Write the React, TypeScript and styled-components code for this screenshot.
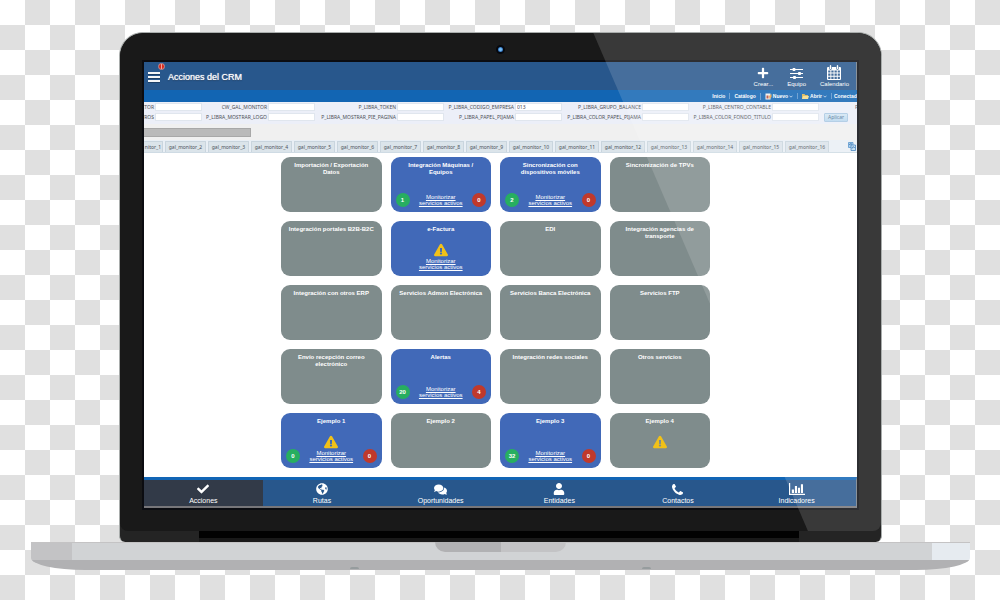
import React from "react";
import styled, { createGlobalStyle } from "styled-components";
import { FaCheck, FaComments, FaExclamationTriangle, FaGlobeAmericas, FaPlus, FaUser } from "react-icons/fa";

const sans = '"Liberation Sans", Arial, sans-serif';
const formSans = '"Noto Sans", Tahoma, sans-serif';

const GlobalStyle = createGlobalStyle`
  *, *::before, *::after { box-sizing: border-box; }
  body {
    margin: 0;
    min-height: 100vh;
    font-family: ${sans};
    background: repeating-conic-gradient(#e0e0e0 0 25%, #ffffff 0 50%) 0 0 / 50px 50px;
  }
  button { font: inherit; color: inherit; border: 0; padding: 0; background: none; cursor: pointer; }
  h1, h2 { margin: 0; }
`;

/* ---------- Laptop ---------- */

const Stage = styled.div`
  padding: 32px 0 30px;
`;

const Lid = styled.div`
  position: relative;
  margin: 0 118px 0 119px;
  border: 1px solid #a9adac;
  border-bottom: 0;
  border-radius: 24px 24px 6px 6px;
  background: #242424;
  overflow: hidden;
`;

const Bezel = styled.div`
  padding: 0 24px 23px;
  border-radius: 23px 23px 8px 8px;
  background: #191919;
`;

const CameraRow = styled.div`
  display: flex;
  justify-content: center;
  align-items: center;
  height: 29px;
  padding-top: 4px;
`;

const Camera = styled.span`
  width: 9px;
  height: 9px;
  border: 2px solid #06080d;
  border-radius: 50%;
  background: radial-gradient(#7cc0f2 0 25%, #2a6fc0 70%);
`;

const Hinge = styled.div`
  height: 11px;
  margin: 0 82px 0 79px;
  background: linear-gradient(#020202 0 7px, #191919 7px);
`;

const Glare = styled.div`
  position: absolute;
  inset: 0 0 11px;
  border-radius: 23px 23px 8px 8px;
  background: rgba(255, 255, 255, 0.14);
  clip-path: polygon(62.2% 0, 100% 0, 100% 100%, 90.4% 100%);
  pointer-events: none;
`;

const Base = styled.div`
  margin: 0 30px 0 31px;
  border-radius: 0 0 54px 54px / 0 0 12px 12px;
  overflow: hidden;
`;

const BaseTop = styled.div`
  display: flex;
  justify-content: center;
  height: 18px;
  background: linear-gradient(
    90deg,
    #c3c3c5 0 41px,
    #d1d3d5 41px calc(100% - 38px),
    #e6ebf0 calc(100% - 38px)
  );
  box-shadow: inset 0 1px #c4c3c4;
`;

const Notch = styled.div`
  width: 131px;
  height: 10px;
  border-radius: 0 0 10px 10px;
  background: linear-gradient(90deg, #b1b1b3 50%, #c3c3c5 50%);
`;

const BaseBottom = styled.div`
  display: flex;
  justify-content: space-between;
  align-items: flex-end;
  height: 10px;
  padding: 0 34% 1px;
  background: #b1b1b3;
`;

const Foot = styled.span`
  width: 9px;
  height: 2px;
  border-radius: 2px 2px 0 0;
  background: #969c9e;
`;

/* ---------- Screen ---------- */

const Screen = styled.div`
  background: #ffffff;
  box-shadow: 0 0 0 2px #0b0c11;
  overflow: hidden;
`;

const Header = styled.header`
  display: flex;
  align-items: center;
  height: 28px;
  padding: 0 7px 0 4px;
  border-right: 1px solid #77808a;
  background: #28578c;
  color: #ffffff;
`;

const MenuButton = styled.button`
  position: relative;
  display: flex;
  flex-direction: column;
  gap: 2px;
  width: 12px;
  margin-right: 8px;
  padding-top: 2px;
`;

const MenuLine = styled.span`
  height: 2px;
  background: #f4f6f8;
  box-shadow: 0 1px #1c3f66;
`;

const Alert = styled.span`
  position: absolute;
  top: -7px;
  right: -5px;
  width: 7px;
  height: 7px;
  border: 1px solid #c98a8d;
  border-radius: 50%;
  background: linear-gradient(90deg, #d9291c 2px, #f0a59c 2px 3px, #d9291c 3px);
`;

const Title = styled.h1`
  flex: 1;
  padding-top: 2px;
  font-size: 9px;
  line-height: 12px;
  font-weight: 400;
  text-shadow: 0 0 1px #ffffff, 0 1px 1px #163458;
`;

const Tools = styled.div`
  display: flex;
  gap: 14px;
`;

const Tool = styled.button`
  display: flex;
  flex-direction: column;
  align-items: center;
  font-size: 6px;
  line-height: 7px;
`;

const ToolIcon = styled.span`
  display: flex;
  align-items: center;
  justify-content: center;
  height: 16px;
`;

const LinkBar = styled.nav`
  display: flex;
  justify-content: flex-end;
  align-items: center;
  height: 12px;
  background: #1265b3;
  color: #ffffff;
  font-size: 5px;
  line-height: 6px;
  font-weight: 700;
  overflow: hidden;
`;

const BarItem = styled.a<{ $last?: boolean }>`
  display: flex;
  align-items: center;
  gap: 1px;
  width: ${(p) => (p.$last ? "26px" : "auto")};
  padding: ${(p) => (p.$last ? "0 0 0 2px" : "0 4px")};
  border-left: 1px solid #5c94cb;
  color: inherit;
  text-decoration: none;
  white-space: nowrap;

  &:first-child { border-left: 0; }
`;

const Fields = styled.form`
  display: grid;
  grid-template-columns: 58fr 113fr 129fr 118fr 127fr 130fr 38fr;
  grid-auto-rows: 8px;
  row-gap: 2px;
  padding: 1px 0 3px;
  background: #eceff8;
  font-family: ${formSans};
  font-size: 5px;
  line-height: 8px;
  color: #4c4f56;
`;

const Field = styled.div`
  display: flex;
  justify-content: flex-end;
  gap: 1px;
  min-width: 0;
  white-space: nowrap;
`;

const FieldInput = styled.input`
  flex: none;
  width: 47px;
  height: 8px;
  padding: 0 1px;
  border: 1px solid #e0e6ee;
  background: #ffffff;
  font: inherit;
  line-height: 6px;
  color: #3f434a;
`;

const EdgeLabel = styled.span`
  padding-left: 36px;
  overflow: hidden;
`;

const Apply = styled.button`
  justify-self: start;
  width: 24px;
  height: 9px;
  margin-left: 5px;
  border: 1px solid #a9c8e2;
  border-radius: 1px;
  background: linear-gradient(#d4e6f4, #b9d7ee);
  line-height: 7px;
  color: #4f7596;
`;

const ScrollTrack = styled.div`
  height: 16px;
  padding: 4px 0 3px;
  background: #f0f0f0;
`;

const ScrollThumb = styled.div`
  width: 15%;
  height: 9px;
  border: 1px solid #a8a8a8;
  border-left: 0;
  background: #bababa;
`;

const TabStrip = styled.div`
  display: flex;
  align-items: flex-end;
  gap: 2px;
  height: 13px;
  border-bottom: 1px solid #cfdbe4;
  background: #e9eff5;
  font-family: ${formSans};
  color: #4c5259;
`;

const Tab = styled.button<{ $size: "cut" | "short" | "long" }>`
  flex: none;
  width: ${(p) => ({ cut: 19, short: 41, long: 44 })[p.$size]}px;
  height: 11px;
  padding-top: 1px;
  border: 1px solid #c9d5de;
  border-width: 1px 1px 0 ${(p) => (p.$size === "cut" ? 0 : 1)}px;
  border-radius: 1px 1px 0 0;
  background: #dbe4ea;
  font-size: 5px;
  line-height: 9px;
  white-space: nowrap;
`;

const RefreshButton = styled.button`
  display: flex;
  margin: 0 1px 1px auto;
`;

/* ---------- Cards ---------- */

const Cards = styled.main`
  display: grid;
  grid-template-columns: repeat(4, 1fr);
  grid-auto-rows: minmax(55px, auto);
  gap: 9px;
  padding: 4px 147px 9px 137px;
`;

const Card = styled.section<{ $active?: boolean }>`
  display: flex;
  flex-direction: column;
  padding: 5px;
  border-radius: 9px;
  background: ${(p) => (p.$active ? "#4169b8" : "#7f8c8c")};
  color: #ffffff;
`;

const CardTitle = styled.h2`
  min-height: 14px;
  padding: 0 2px;
  font-size: 6px;
  line-height: 7px;
  text-align: center;
`;

const CardMiddle = styled.div`
  flex: 1;
  display: flex;
  justify-content: center;
  padding-top: 3px;
  color: #f1c118;
`;

const CardFooter = styled.div`
  display: flex;
  align-items: center;
  justify-content: space-between;
  height: 14px;
`;

const Count = styled.span<{ $tone?: "ok" | "bad" }>`
  width: 14px;
  height: 14px;
  border-radius: 50%;
  background: ${(p) => (p.$tone === "ok" ? "#27ae60" : p.$tone === "bad" ? "#c0392b" : "transparent")};
  font-size: 6px;
  line-height: 14px;
  font-weight: 700;
  text-align: center;
`;

const MonitorLink = styled.a`
  width: 50px;
  color: #ffffff;
  font-size: 6px;
  line-height: 6px;
  text-align: center;
  text-decoration: underline;
`;

/* ---------- Bottom navigation ---------- */

const BottomNav = styled.nav`
  display: grid;
  grid-template-columns: repeat(6, 1fr);
  height: 31px;
  border-top: 3px solid #1165b5;
  border-right: 1px solid #77808a;
  border-bottom: 2px solid #77767a;
  background: #28578c;
`;

const NavItem = styled.button<{ $current?: boolean }>`
  display: flex;
  flex-direction: column;
  align-items: center;
  padding-top: 2px;
  background: ${(p) => (p.$current ? "#323a48" : "transparent")};
  color: #ffffff;
  font-size: 7px;
  line-height: 8px;
`;

const NavIcon = styled.span`
  display: flex;
  align-items: center;
  height: 14px;
  margin-bottom: 1px;
`;

/* ---------- Icons ---------- */

const SlidersIcon = () => (
  <svg width="13" height="12" viewBox="0 0 13 12" fill="none" stroke="#fff" aria-hidden="true">
    <path d="M0 2.5h13M0 6.5h13M0 10.5h13" strokeWidth="1.2" />
    <path d="M4 1v3M9.5 5v3M4.5 9v3" strokeWidth="2.6" />
  </svg>
);

const CalendarIcon = () => (
  <svg width="14" height="15" viewBox="0 0 14 15" aria-hidden="true">
    <path d="M1 2h12a1 1 0 0 1 1 1v11a1 1 0 0 1-1 1H1a1 1 0 0 1-1-1V3a1 1 0 0 1 1-1z" fill="#fff" />
    <path d="M1.2 5.5h2.2v2H1.2zM4.3 5.5h2.3v2H4.3zM7.5 5.5h2.3v2H7.5zM10.7 5.5h2.2v2h-2.2zM1.2 8.5h2.2v2.2H1.2zM4.3 8.5h2.3v2.2H4.3zM7.5 8.5h2.3v2.2H7.5zM10.7 8.5h2.2v2.2h-2.2zM1.2 11.7h2.2v2.2H1.2zM4.3 11.7h2.3v2.2H4.3zM7.5 11.7h2.3v2.2H7.5zM10.7 11.7h2.2v2.2h-2.2z" fill="#28578c" />
    <path d="M3.5 .8v2.6M10.5 .8v2.6" stroke="#28578c" strokeWidth="2.6" strokeLinecap="round" />
    <path d="M3.5 .8v2.6M10.5 .8v2.6" stroke="#fff" strokeWidth="1.4" strokeLinecap="round" />
  </svg>
);

const ChartIcon = () => (
  <svg width="16" height="12" viewBox="0 0 16 12" fill="#fff" aria-hidden="true">
    <path d="M0 0h1.2v10.8H16V12H0zM2.8 6.5H5V10H2.8zM5.9 3H8v7H5.9zM8.9 4.8H11V10H8.900zM11.9 1.2H14V10h-2.1z" />
  </svg>
);

const PhoneIcon = () => (
  <svg width="11" height="11" viewBox="0 128 1408 1408" fill="#fff" aria-hidden="true">
    <path d="M1408 1240q0 27-10 70.5t-21 68.5q-21 50-122 106-94 51-186 51-27 0-53-3.5t-57.5-12.5-47-14.5-55.5-20.5-49-18q-98-35-175-83-127-79-264-216t-216-264q-48-77-83-175-3-9-18-49t-20.5-55.5-14.5-47-12.5-57.5-3.5-53q0-92 51-186 56-101 106-122 25-11 68.5-21t70.5-10q14 0 21 3 18 6 53 76 11 19 30 54t35 63.5 31 53.5q3 4 17.5 25t21.5 35.5 7 28.5q0 20-28.5 50t-62 55-62 53-28.5 46q0 9 5 22.5t8.5 20.5 14 24 11.5 19q76 137 174 235t235 174q2 1 19 11.5t24 14 20.5 8.5 22.5 5q18 0 46-28.5t53-62 55-62 50-28.5q14 0 28.5 7t35.5 21.5 25 17.5q25 15 53.5 31t63.5 35 54 30q70 35 76 53 3 7 3 21z" />
  </svg>
);

const NewDocIcon = () => (
  <svg width="7" height="7" viewBox="0 0 7 7" aria-hidden="true">
    <path d="M.5 .5h5v6h-5z" fill="#f3efe9" />
    <path d="M1.5 2.5h2v3h-2z" fill="#b2483c" />
    <path d="M4 3l2.5-2v3L4.5 6z" fill="#e9a24a" />
  </svg>
);

const FolderIcon = () => (
  <svg width="7" height="6" viewBox="0 0 7 6" aria-hidden="true">
    <path d="M0 1h2.5l.7 1H6v4H0z" fill="#d9b44f" />
    <path d="M1.2 3H7L6 6H0z" fill="#f4dc8c" />
  </svg>
);

const ChevronIcon = () => (
  <svg width="4" height="3" viewBox="0 0 4 3" fill="none" stroke="#cfe0f1" strokeWidth=".8" aria-hidden="true">
    <path d="M.5 .7L2 2.2 3.5 .7" />
  </svg>
);

const RefreshIcon = () => (
  <svg width="8" height="9" viewBox="0 0 8 9" aria-hidden="true">
    <path d="M.5 .5h4.5v5H.5z" fill="#9ec9ec" stroke="#3f86c6" strokeWidth=".8" />
    <path d="M3 3h4.5v5.5H3z" fill="#bcdcf4" stroke="#2d74b8" strokeWidth=".8" />
    <path d="M4 6.5c0-2 2.5-2 2.5-.5M1.5 3c0-1.5 2-1.5 2.5-.5" fill="none" stroke="#1d62a8" />
  </svg>
);

/* ---------- Data ---------- */

interface FieldData { label: string; value?: string }

const fieldRows: FieldData[][] = [
  [
    { label: "ITOR" },
    { label: "CW_GAL_MONITOR" },
    { label: "P_LIBRA_TOKEN" },
    { label: "P_LIBRA_CODIGO_EMPRESA", value: "013" },
    { label: "P_LIBRA_GRUPO_BALANCE" },
    { label: "P_LIBRA_CENTRO_CONTABLE" },
  ],
  [
    { label: "TROS" },
    { label: "P_LIBRA_MOSTRAR_LOGO" },
    { label: "P_LIBRA_MOSTRAR_PIE_PAGINA" },
    { label: "P_LIBRA_PAPEL_PIJAMA" },
    { label: "P_LIBRA_COLOR_PAPEL_PIJAMA" },
    { label: "P_LIBRA_COLOR_FONDO_TITULO" },
  ],
];

interface CardData { title: string; active?: boolean; warning?: boolean; ok?: number; bad?: number }

const cards: CardData[] = [
  { title: "Importación / Exportación Datos" },
  { title: "Integración Máquinas / Equipos", active: true, ok: 1, bad: 0 },
  { title: "Sincronización con dispositivos móviles", active: true, ok: 2, bad: 0 },
  { title: "Sincronización de TPVs" },
  { title: "Integración portales B2B-B2C" },
  { title: "e-Factura", active: true, warning: true },
  { title: "EDI" },
  { title: "Integración agencias de transporte" },
  { title: "Integración con otros ERP" },
  { title: "Servicios Admon Electrónica" },
  { title: "Servicios Banca Electrónica" },
  { title: "Servicios FTP" },
  { title: "Envío recepción correo electrónico" },
  { title: "Alertas", active: true, ok: 20, bad: 4 },
  { title: "Integración redes sociales" },
  { title: "Otros servicios" },
  { title: "Ejemplo 1", active: true, warning: true, ok: 0, bad: 0 },
  { title: "Ejemplo 2" },
  { title: "Ejemplo 3", active: true, ok: 32, bad: 0 },
  { title: "Ejemplo 4", warning: true },
];

const navItems = [
  { label: "Acciones", icon: <FaCheck size={12} /> },
  { label: "Rutas", icon: <FaGlobeAmericas size={12} /> },
  { label: "Oportunidades", icon: <FaComments size={13} /> },
  { label: "Entidades", icon: <FaUser size={12} /> },
  { label: "Contactos", icon: <PhoneIcon /> },
  { label: "Indicadores", icon: <ChartIcon /> },
];

const tabNumbers = Array.from({ length: 16 }, (_, i) => i + 1);

const ServiceCard = ({ title, active, warning, ok, bad }: CardData) => (
  <Card $active={active}>
    <CardTitle>{title}</CardTitle>
    <CardMiddle>{warning && <FaExclamationTriangle size={14} />}</CardMiddle>
    <CardFooter>
      {active && (
        <>
          <Count $tone={ok === undefined ? undefined : "ok"}>{ok}</Count>
          <MonitorLink href="#servicios">Monitorizar servicios activos</MonitorLink>
          <Count $tone={bad === undefined ? undefined : "bad"}>{bad}</Count>
        </>
      )}
    </CardFooter>
  </Card>
);

export default function App() {
  return (
    <>
      <GlobalStyle />
      <Stage>
        <Lid>
          <Bezel>
            <CameraRow><Camera /></CameraRow>
            <Screen>
              <Header>
                <MenuButton aria-label="Menú">
                  <MenuLine /><MenuLine /><MenuLine />
                  <Alert />
                </MenuButton>
                <Title>Acciones del CRM</Title>
                <Tools>
                  <Tool><ToolIcon><FaPlus size={12} /></ToolIcon>Crear...</Tool>
                  <Tool><ToolIcon><SlidersIcon /></ToolIcon>Equipo</Tool>
                  <Tool><ToolIcon><CalendarIcon /></ToolIcon>Calendario</Tool>
                </Tools>
              </Header>
              <LinkBar>
                <BarItem href="#inicio">Inicio</BarItem>
                <BarItem href="#catalogo">Catálogo</BarItem>
                <BarItem href="#nuevo"><NewDocIcon />Nuevo<ChevronIcon /></BarItem>
                <BarItem href="#abrir"><FolderIcon />Abrir<ChevronIcon /></BarItem>
                <BarItem href="#conectado" $last>Conectado</BarItem>
              </LinkBar>
              <Fields onSubmit={(e) => e.preventDefault()}>
                {fieldRows.map((row, r) => (
                  <React.Fragment key={r}>
                    {row.map((f) => (
                      <Field key={f.label}>
                        <label htmlFor={f.label}>{f.label}</label>
                        <FieldInput id={f.label} defaultValue={f.value} />
                      </Field>
                    ))}
                    {r === 0 ? <EdgeLabel>P</EdgeLabel> : <Apply type="submit">Aplicar</Apply>}
                  </React.Fragment>
                ))}
              </Fields>
              <ScrollTrack><ScrollThumb /></ScrollTrack>
              <TabStrip>
                {tabNumbers.map((n) => (
                  <Tab key={n} $size={n === 1 ? "cut" : n < 10 ? "short" : "long"}>
                    {n === 1 ? "nitor_1" : `gal_monitor_${n}`}
                  </Tab>
                ))}
                <RefreshButton aria-label="Actualizar"><RefreshIcon /></RefreshButton>
              </TabStrip>
              <Cards>
                {cards.map((c) => <ServiceCard key={c.title} {...c} />)}
              </Cards>
              <BottomNav>
                {navItems.map((item, i) => (
                  <NavItem key={item.label} $current={i === 0}>
                    <NavIcon>{item.icon}</NavIcon>
                    {item.label}
                  </NavItem>
                ))}
              </BottomNav>
            </Screen>
          </Bezel>
          <Hinge />
          <Glare />
        </Lid>
        <Base>
          <BaseTop><Notch /></BaseTop>
          <BaseBottom><Foot /><Foot /></BaseBottom>
        </Base>
      </Stage>
    </>
  );
}
